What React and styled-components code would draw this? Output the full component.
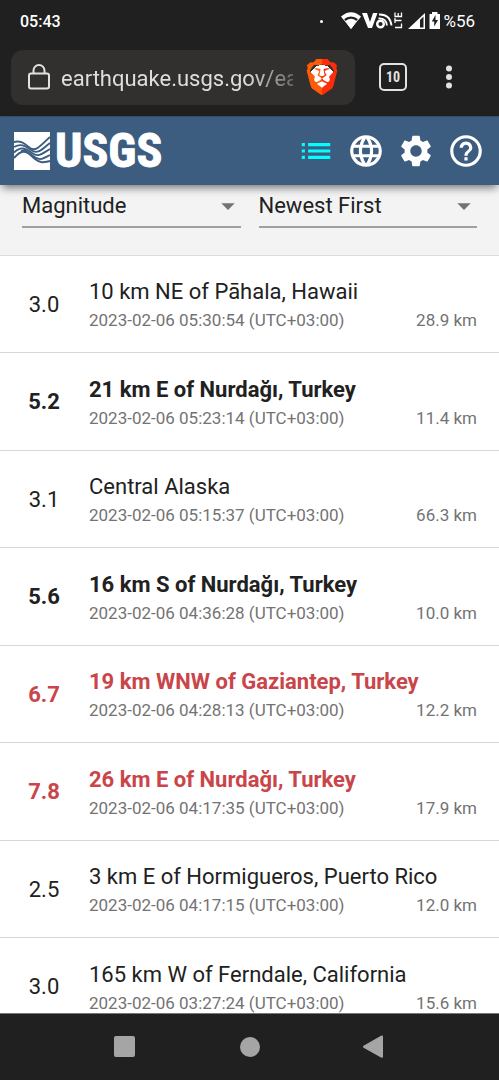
import React from 'react'
import styled, { createGlobalStyle } from 'styled-components'
import { FaBrave } from 'react-icons/fa6'
import { MdArrowDropDown, MdHelpOutline, MdLanguage, MdList, MdSettings } from 'react-icons/md'

const quakes = [
  { mag: '3.0', place: '10 km NE of Pāhala, Hawaii', time: '2023-02-06 05:30:54 (UTC+03:00)', depth: '28.9 km' },
  { mag: '5.2', place: '21 km E of Nurdağı, Turkey', time: '2023-02-06 05:23:14 (UTC+03:00)', depth: '11.4 km', level: 'strong' },
  { mag: '3.1', place: 'Central Alaska', time: '2023-02-06 05:15:37 (UTC+03:00)', depth: '66.3 km' },
  { mag: '5.6', place: '16 km S of Nurdağı, Turkey', time: '2023-02-06 04:36:28 (UTC+03:00)', depth: '10.0 km', level: 'strong' },
  { mag: '6.7', place: '19 km WNW of Gaziantep, Turkey', time: '2023-02-06 04:28:13 (UTC+03:00)', depth: '12.2 km', level: 'major' },
  { mag: '7.8', place: '26 km E of Nurdağı, Turkey', time: '2023-02-06 04:17:35 (UTC+03:00)', depth: '17.9 km', level: 'major' },
  { mag: '2.5', place: '3 km E of Hormigueros, Puerto Rico', time: '2023-02-06 04:17:15 (UTC+03:00)', depth: '12.0 km' },
  { mag: '3.0', place: '165 km W of Ferndale, California', time: '2023-02-06 03:27:24 (UTC+03:00)', depth: '15.6 km' },
]

const StatusIcons = () => (
  <svg width="100" height="22" viewBox="0 1 100 22" fill="#fff" aria-hidden="true">
    {/* wifi */}
    <path d="M0 7.500Q10 -1 20 7.500L17.500 10.500Q10 4.500 2.500 10.500Z" />
    <path d="M4.500 12Q10 7.500 15.500 12L10 20Z" />
    <path d="M1 8L10 19.500L19 8" fill="none" stroke="#fff" strokeWidth="1" />
    {/* volte */}
    <path d="M21 4H26L29 13L32 4H36.500L31 19H27Z" />
    <circle cx="39.500" cy="15" r="3.300" fill="none" stroke="#fff" strokeWidth="2.400" />
    <path d="M37.500 9.500Q45 9 46 16.500M38 5.500Q49 5 50.500 16.500" fill="none" stroke="#fff" strokeWidth="1.800" />
    <g fill="none" stroke="#fff" strokeWidth="1.300">
      <path d="M54 18.500H60.500V14.500M54 11.500H60.500M54 9V14M54 3.500V7.500H60.500V3.500M57.200 4V7.500" />
    </g>
    {/* signal */}
    <path d="M67 20L84 4V20Z" />
    <path d="M79 11L82.500 7.500V18.500H79Z" fill="#202020" />
    {/* battery */}
    <path d="M88.500 5H91V3H96.500V5H99V20H88.500Z" />
    <path d="M94.500 6L90.800 12.500H93.200V17.500L97 11H94.500Z" fill="#202020" />
  </svg>
)

const LockIcon = () => (
  <svg width="22" height="26" viewBox="0 0 22 26" fill="none" stroke="#e2e2e2" strokeWidth="2" aria-hidden="true">
    <rect x="1" y="9.500" width="20" height="15" rx="2" />
    <path d="M5.500 9.500V6.500a5.500 5.500 0 0 1 11 0V9.500" />
  </svg>
)

const BraveLogo = () => (
  <BraveBox>
    <svg width="0" height="0" aria-hidden="true">
      <linearGradient id="braveFill" x1="0" x2="1" y1="0" y2="0">
        <stop offset="0.48" stopColor="#ff5a0a" />
        <stop offset="0.52" stopColor="#ff2c0a" />
      </linearGradient>
    </svg>
    <FaBrave size={36} fill="url(#braveFill)" />
  </BraveBox>
)

const UsgsWaves = () => (
  <svg width="36" height="38" viewBox="0 0 36 38" aria-hidden="true">
    <rect width="36" height="38" fill="#fff" />
    <g fill="none" stroke="#3d5d80" strokeWidth="1.900">
      <path d="M0 10C7 8 11 12 16 16C22 20 26 14 36 5" />
      <path d="M0 15C7 11 11 14 17 18C24 23 28 17 36 11" />
      <path d="M0 20.500C7 14 11 16 18 21C25 26 29 21 36 17" />
      <path d="M0 26C7 18 11 18 19 24C26 30 30 26 36 23" />
      <path d="M7 19C12 17 15 22 21 27C27 32 31 30 36 29" />
    </g>
  </svg>
)

const App = () => {
  return (
    <>
      <GlobalStyle />
      <Screen>
        <StatusBar>
          <span>05:43</span>
          <StatusRight>
            <Dot />
            <StatusIcons />
            <Battery>%56</Battery>
          </StatusRight>
        </StatusBar>

        <BrowserBar>
          <AddressBox>
            <LockIcon />
            <AddressInput aria-label="Address" defaultValue="earthquake.usgs.gov/earthquakes/map" />
            <BraveLogo />
          </AddressBox>
          <TabsButton aria-label="Open tabs">10</TabsButton>
          <MenuButton aria-label="Browser menu">
            <svg width="6" height="24" viewBox="0 0 6 24" fill="#e2e2e2">
              <circle cx="3" cy="3.500" r="3" />
              <circle cx="3" cy="12" r="3" />
              <circle cx="3" cy="20.500" r="3" />
            </svg>
          </MenuButton>
        </BrowserBar>

        <AppHeader>
          <Logo href="#" aria-label="USGS">
            <UsgsWaves />
            <LogoText>USGS</LogoText>
          </Logo>
          <Tools>
            <ToolButton $active aria-label="List"><MdList /></ToolButton>
            <ToolButton aria-label="Map"><MdLanguage /></ToolButton>
            <ToolButton aria-label="Settings"><MdSettings /></ToolButton>
            <ToolButton aria-label="Help"><MdHelpOutline /></ToolButton>
          </Tools>
        </AppHeader>

        <Content>
          <Filters>
            <SelectField>
              <Select aria-label="List format"><option>Magnitude</option></Select>
              <MdArrowDropDown />
            </SelectField>
            <SelectField>
              <Select aria-label="Sort order"><option>Newest First</option></Select>
              <MdArrowDropDown />
            </SelectField>
          </Filters>
          <List>
            {quakes.map((quake) => (
              <Row key={quake.time} $level={quake.level}>
                <Magnitude>{quake.mag}</Magnitude>
                <Details>
                  <Place>{quake.place}</Place>
                  <Meta>
                    <time>{quake.time}</time>
                    <span>{quake.depth}</span>
                  </Meta>
                </Details>
              </Row>
            ))}
          </List>
        </Content>

        <NavBar>
          <NavButton aria-label="Recent apps">
            <svg width="24" height="24" fill="#a5a5a5"><rect x="1" y="1" width="21" height="21" rx="2" /></svg>
          </NavButton>
          <NavButton aria-label="Home">
            <svg width="24" height="24" fill="#a5a5a5"><circle cx="12" cy="12" r="10" /></svg>
          </NavButton>
          <NavButton aria-label="Back">
            <svg width="24" height="24" fill="#a5a5a5"><path d="M18 0.800Q20 0 20 2V21.500Q20 23.500 18 22.500L1 13Q-1 11.700 1 10.500Z" /></svg>
          </NavButton>
        </NavBar>
      </Screen>
    </>
  )
}

export default App

const GlobalStyle = createGlobalStyle`
* {
  box-sizing: border-box;
}
body {
  margin: 0;
  background: #fff;
  font-family: Roboto, "Noto Sans", sans-serif;
}
button {
  border: 0;
  padding: 0;
  background: none;
  font-family: inherit;
  cursor: pointer;
}
svg {
  display: block;
  flex: none;
}
`

const Screen = styled.div`
display: flex;
flex-direction: column;
height: 100vh;
overflow: hidden;
`

const StatusBar = styled.div`
display: flex;
align-items: center;
justify-content: space-between;
flex: none;
height: 42px;
padding: 0 24px 0 20px;
background: #202020;
color: #fff;
font-size: 16px;
font-weight: 500;
`

const StatusRight = styled.div`
display: flex;
align-items: center;
gap: 2px;
`

const Battery = styled.span`
font-size: 17px;
font-weight: 400;
`

const Dot = styled.span`
width: 3px;
height: 3px;
margin-right: 16px;
border-radius: 50%;
background: #fff;
`

const BrowserBar = styled.div`
display: flex;
align-items: center;
flex: none;
height: 74px;
padding: 0 47px 4px 11px;
background: #202020;
`

const AddressBox = styled.div`
display: flex;
align-items: center;
flex: 1;
min-width: 0;
height: 55px;
padding: 0 17px;
border-radius: 12px;
background: #32302f;
`

const AddressInput = styled.input`
flex: 1;
min-width: 0;
margin: 0 13px 0 11px;
padding: 2px 0 0;
border: 0;
outline: 0;
background: none;
color: #dedede;
font-family: inherit;
font-size: 22px;
mask-image: linear-gradient(to right, #000 80%, transparent 110%);
`

const BraveBox = styled.div`
display: flex;
justify-content: center;
width: 32px;
background: radial-gradient(circle at 50% 50%, #fff 12px, transparent 12px);
`

const TabsButton = styled.button`
width: 28px;
height: 28px;
margin: 0 39px 0 24px;
border: 2px solid #e2e2e2;
border-radius: 5px;
color: #e2e2e2;
font-family: "Roboto Condensed", Roboto, sans-serif;
font-size: 14px;
font-weight: 700;
`

const MenuButton = styled.button`
display: flex;
justify-content: center;
width: 6px;
`

const AppHeader = styled.header`
display: flex;
align-items: center;
justify-content: space-between;
flex: none;
height: 69px;
padding: 0 14px;
border-top: 1px solid #36506c;
background: #3d5d80;
box-shadow: 0 5px 8px -2px rgba(0, 0, 0, 0.5);
z-index: 1;
`

const Logo = styled.a`
display: flex;
align-items: center;
gap: 5px;
color: #fff;
text-decoration: none;
`

const LogoText = styled.span`
font-family: "Liberation Sans Narrow", "Roboto Condensed", "Noto Sans CJK SC", sans-serif;
font-size: 48px;
font-weight: 700;
line-height: 48px;
-webkit-text-stroke: 1px #fff;
`

const Tools = styled.nav`
display: flex;
gap: 12px;
`

const ToolButton = styled.button`
display: flex;
color: ${({ $active }) => ($active ? '#00ffff' : '#fff')};
font-size: 38px;
`

const Content = styled.main`
flex: 1;
min-height: 0;
overflow: hidden;
border-bottom: 1px solid #777;
`

const Filters = styled.div`
display: grid;
grid-template-columns: 1fr 1fr;
gap: 18px;
height: 71px;
padding: 0 22px 27px;
border-bottom: 1px solid #dcdcdc;
background: #f3f3f3;
`

const SelectField = styled.div`
display: flex;
align-items: center;
border-bottom: 2px solid #a0a0a0;

svg {
  width: 32px;
  height: 32px;
  margin: 0 -3px 0 -29px;
  color: #737373;
  pointer-events: none;
}
`

const Select = styled.select`
flex: 1;
min-width: 0;
padding: 0;
border: 0;
outline: 0;
appearance: none;
background: none;
color: #212121;
font-family: inherit;
font-size: 22px;
`

const List = styled.ul`
margin: 0;
padding: 0;
list-style: none;
`

const Row = styled.li`
display: flex;
align-items: center;
height: 97px;
padding: 0 22px;
border-bottom: 1px solid #d6d6d6;
color: ${({ $level }) => ($level === 'major' ? '#c9454a' : '#212121')};
font-weight: ${({ $level }) => ($level ? 700 : 400)};

&:nth-child(even) {
  height: 98px;
}
`

const Magnitude = styled.span`
width: 44px;
margin-right: 23px;
font-size: 22px;
text-align: center;
`

const Details = styled.div`
flex: 1;
min-width: 0;
padding-top: 2px;
`

const Place = styled.div`
font-size: 22px;
line-height: 30px;
white-space: nowrap;
`

const Meta = styled.div`
display: flex;
justify-content: space-between;
color: #737373;
font-size: 17px;
font-weight: 400;
line-height: 26px;
`

const NavBar = styled.nav`
display: grid;
grid-template-columns: repeat(3, 1fr);
align-items: center;
flex: none;
height: 66px;
padding: 0 62px;
background: #202020;
`

const NavButton = styled.button`
display: flex;
justify-content: center;
`
